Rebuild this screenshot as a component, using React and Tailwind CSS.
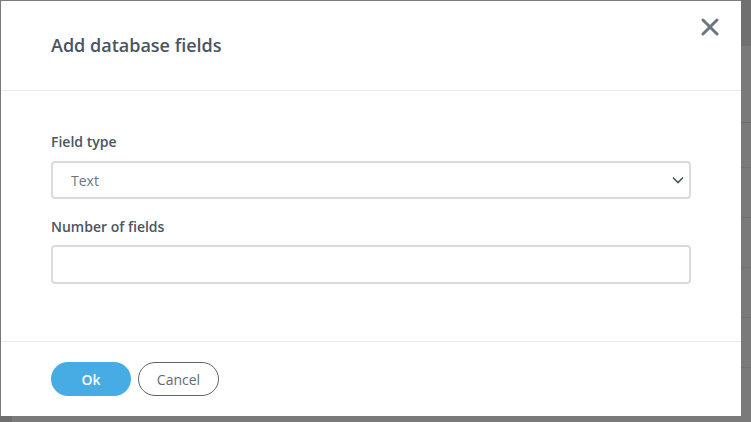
import React, { useState } from "react";

function CloseIcon() {
  return (
    <svg width="18" height="18" viewBox="0 0 18 18" fill="none">
      <path d="M2 2L16 16M16 2L2 16" stroke="#6b7680" strokeWidth="3" strokeLinecap="round" />
    </svg>
  );
}

function Chevron() {
  return (
    <svg width="12" height="8" viewBox="0 0 12 8" fill="none">
      <path d="M1 1.5L6 6.5L11 1.5" stroke="#4a5560" strokeWidth="1.6" />
    </svg>
  );
}

export default function App() {
  const [type, setType] = useState("Text");
  const [count, setCount] = useState("");

  return (
    <div
      className="w-[751px] h-[422px] bg-[#7a7a7a] flex flex-col overflow-hidden"
      style={{ fontFamily: '"Open Sans", "Noto Sans", sans-serif' }}
    >
      <div className="flex h-[416px] pt-[1px] pl-[1px]">
        {/* modal */}
        <div className="w-[740px] h-[415px] bg-white flex flex-col">
          <div className="h-[90px] shrink-0 border-b border-[#ebebeb] flex items-center justify-between pl-[50px] pr-[22px]">
            <h2 className="text-[18px] text-[#4a5560] font-semibold">Add database fields</h2>
            <button className="self-start mt-[17px]">
              <CloseIcon />
            </button>
          </div>

          <div className="h-[251px] shrink-0 border-b border-[#ebebeb] px-[50px] pt-[41px]">
            <label className="block text-[14px] leading-[20px] font-semibold text-[#4a5560]">Field type</label>
            <div className="relative mt-[9px] w-[640px] h-[38px] border-2 border-[#dadada] rounded-[4px] flex items-center justify-between pl-[18px] pr-[5px]">
              <span className="text-[14px] text-[#6b7580]">{type}</span>
              <Chevron />
              <select
                value={type}
                onChange={(e) => setType(e.target.value)}
                className="absolute inset-0 opacity-0"
              >
                <option>Text</option>
                <option>Number</option>
                <option>Date</option>
              </select>
            </div>

            <label className="block mt-[18px] text-[14px] leading-[20px] font-semibold text-[#4a5560]">Number of fields</label>
            <input
              value={count}
              onChange={(e) => setCount(e.target.value)}
              className="block mt-[8px] w-[640px] h-[39px] border-2 border-[#dadada] rounded-[4px] px-[18px] text-[14px] text-[#4a5560] outline-none"
            />
          </div>

          <div className="flex-1 flex items-start gap-[7px] pl-[50px] pt-[20px]">
            <button className="w-[80px] h-[34px] rounded-full bg-[#48ace4] text-white text-[14px] font-semibold">Ok</button>
            <button className="w-[81px] h-[34px] rounded-full border border-[#5a6570] text-[#5f6a75] text-[14px]">Cancel</button>
          </div>
        </div>

        {/* page behind overlay */}
        <div className="flex-1 flex flex-col -mt-[1px]">
          <div className="h-[46px] bg-[#707070]" />
          <div className="h-[77px] border-b border-[#6a6a6a]" />
          <div className="h-[45px] border-b border-[#727272]" />
          <div className="h-[50px] border-b border-[#727272]" />
          <div className="h-[50px] border-b border-[#727272]" />
          <div className="h-[50px] border-b border-[#727272]" />
          <div className="h-[50px] border-b border-[#727272]" />
        </div>
      </div>
      <div className="flex-1 flex">
        <div className="w-[12px] bg-[#6f6f6f]" />
        <div className="flex-1" />
      </div>
    </div>
  );
}
